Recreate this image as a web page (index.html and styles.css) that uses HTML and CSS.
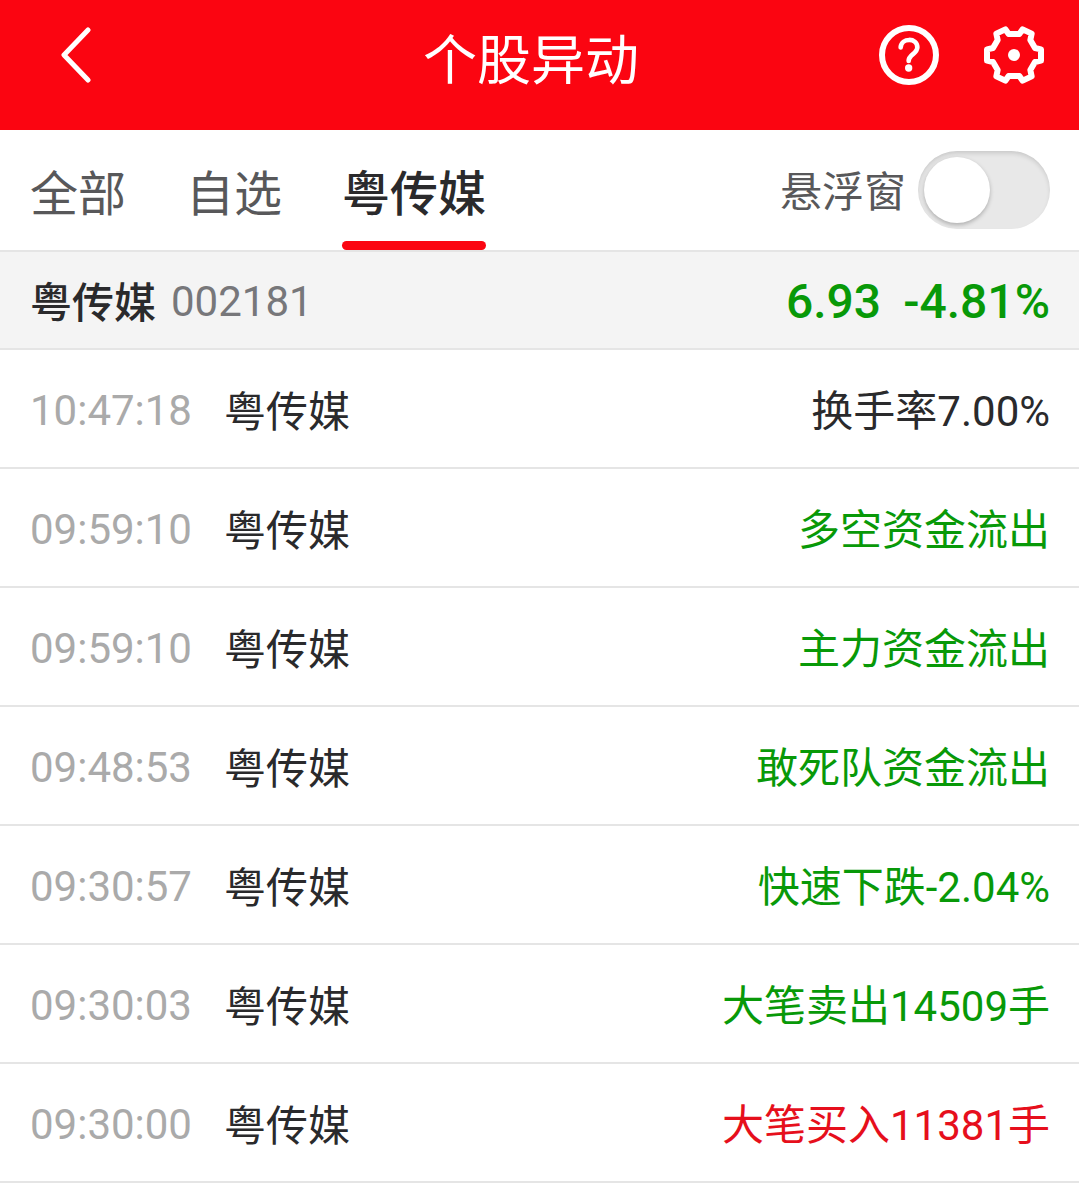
FILE: index.html
```html
<!DOCTYPE html>
<html lang="zh-CN">
<head>
  <meta charset="UTF-8">
  <meta name="viewport" content="width=device-width, initial-scale=1">
  <title>个股异动</title>
  <link rel="stylesheet" href="styles.css">
</head>
<body>
  <header class="topbar">
    <button type="button" class="icon-btn back" aria-label="返回">
      <svg width="30" height="56" viewBox="0 0 30 56">
        <path d="M27 3 3 28l24 25" />
      </svg>
    </button>
    <h1>个股异动</h1>
    <div class="actions">
      <button type="button" class="icon-btn" aria-label="帮助">
        <svg width="60" height="60" viewBox="0 0 180 180">
          <circle cx="90" cy="90" r="81" stroke-width="18" />
          <path d="M65 67C67 38 115 37 115 67C115 87 89 88 89 108" stroke-width="14" />
          <circle class="dot" cx="89" cy="129" r="11" />
        </svg>
      </button>
      <button type="button" class="icon-btn" aria-label="设置">
        <svg width="60" height="60" viewBox="0 0 180 180">
          <path stroke-width="18" d="M9 73 27 69 41 45 37 26 64 13 74 27H106L116 13 143 26 139 45 153 69 171 73V107L153 111 139 135 143 154 116 167 106 153H74L64 167 37 154 41 135 27 111 9 107Z" />
          <circle class="dot" cx="90" cy="90" r="18" />
        </svg>
      </button>
    </div>
  </header>

  <nav class="tabbar">
    <div class="tabs">
      <a href="#all">全部</a>
      <a href="#mine">自选</a>
      <a href="#stock" class="active" aria-current="page">粤传媒</a>
    </div>
    <label class="float-switch" for="float-window">
      <span>悬浮窗</span>
      <input type="checkbox" role="switch" id="float-window">
    </label>
  </nav>

  <main>
    <section class="stock">
      <h2>粤传媒</h2>
      <span class="code">002181</span>
      <div class="quote">
        <span>6.93</span>
        <span>-4.81%</span>
      </div>
    </section>

    <table class="events">
      <tbody>
        <tr>
          <td class="time">10:47:18</td>
          <td class="name">粤传媒</td>
          <td class="event">换手率7.00%</td>
        </tr>
        <tr>
          <td class="time">09:59:10</td>
          <td class="name">粤传媒</td>
          <td class="event down">多空资金流出</td>
        </tr>
        <tr>
          <td class="time">09:59:10</td>
          <td class="name">粤传媒</td>
          <td class="event down">主力资金流出</td>
        </tr>
        <tr>
          <td class="time">09:48:53</td>
          <td class="name">粤传媒</td>
          <td class="event down">敢死队资金流出</td>
        </tr>
        <tr>
          <td class="time">09:30:57</td>
          <td class="name">粤传媒</td>
          <td class="event down">快速下跌-2.04%</td>
        </tr>
        <tr>
          <td class="time">09:30:03</td>
          <td class="name">粤传媒</td>
          <td class="event down">大笔卖出14509手</td>
        </tr>
        <tr>
          <td class="time">09:30:00</td>
          <td class="name">粤传媒</td>
          <td class="event up">大笔买入11381手</td>
        </tr>
      </tbody>
    </table>
  </main>
</body>
</html>
```
FILE: styles.css
```css
* {
  box-sizing: border-box;
}

body {
  margin: 0;
  font-family: Roboto, "Noto Sans CJK SC", sans-serif;
  font-size: 42px;
  line-height: 60px;
  color: #2a2a2c;
  background-color: #fff;
}

h1, h2 {
  margin: 0;
}

/* header */
.topbar {
  display: grid;
  grid-template-columns: 1fr auto 1fr;
  align-items: start;
  height: 130px;
  padding: 25px 35px 0 18px;
  background-color: #fb0511;
  color: #fff;
}

.topbar h1 {
  font-size: 54px;
  font-weight: 400;
  line-height: 74px;
}

.icon-btn {
  display: flex;
  align-items: center;
  height: 60px;
  padding: 0;
  border: 0;
  background: none;
  color: inherit;
  cursor: pointer;
}

.icon-btn svg {
  fill: none;
  stroke: currentColor;
  stroke-linecap: round;
  stroke-linejoin: round;
}

.icon-btn .dot {
  fill: currentColor;
  stroke: none;
}

.back {
  padding-left: 43px;
}

.back svg {
  stroke-width: 5px;
}

.actions {
  display: flex;
  justify-content: flex-end;
  gap: 45px;
}

/* tabs */
.tabbar {
  display: flex;
  justify-content: space-between;
  height: 122px;
  padding: 0 29px 0 30px;
  border-bottom: 2px solid #e5e5e5;
}

.tabs {
  display: flex;
  gap: 60px;
  font-size: 48px;
}

.tabs a {
  position: relative;
  height: 120px;
  line-height: 130px;
  color: #58585a;
  text-decoration: none;
}

.tabs .active {
  font-weight: 500;
  color: #2a2a2c;
}

.tabs .active::after {
  content: "";
  position: absolute;
  left: 0;
  right: 0;
  bottom: 0;
  height: 9px;
  border-radius: 5px;
  background-color: #fb0511;
}

.float-switch {
  display: flex;
  align-items: center;
  gap: 12px;
  color: #58585a;
}

.float-switch span {
  padding-top: 6px;
}

.float-switch input {
  appearance: none;
  width: 132px;
  height: 78px;
  margin: 0;
  padding: 6px;
  border-radius: 39px;
  background-color: #e8e8e8;
  box-shadow: inset 0 3px 5px -1px rgba(0, 0, 0, 0.15);
  cursor: pointer;
}

.float-switch input::before {
  content: "";
  display: block;
  width: 66px;
  height: 66px;
  border-radius: 50%;
  background-color: #fff;
  box-shadow: 0 2px 4px rgba(0, 0, 0, 0.25);
}

.float-switch input:checked {
  background-color: #fb0511;
}

.float-switch input:checked::before {
  margin-left: auto;
}

/* current stock */
.stock {
  display: flex;
  align-items: center;
  height: 98px;
  padding: 4px 29px 0 30px;
  border-bottom: 2px solid #e5e5e5;
  background-color: #f4f4f4;
}

.stock h2 {
  padding-top: 4px;
  font-size: 42px;
  font-weight: 500;
}

.code {
  margin-left: 15px;
  color: #77777a;
}

.quote {
  display: flex;
  gap: 22px;
  margin-left: auto;
  font-size: 48px;
  font-weight: 500;
  color: #089908;
}

/* event list */
.events {
  width: 100%;
  border-spacing: 0;
}

.events td {
  height: 119px;
  padding: 4px 0 0;
  border-bottom: 2px solid #e5e5e5;
}

.events .time {
  width: 224px;
  padding-left: 30px;
  color: #aaa;
}

.events .name {
  padding-top: 8px;
}

.events .event {
  padding-top: 6px;
  padding-right: 29px;
  text-align: right;
}

.events .down {
  color: #089908;
}

.events .up {
  color: #e60f1c;
}
```
